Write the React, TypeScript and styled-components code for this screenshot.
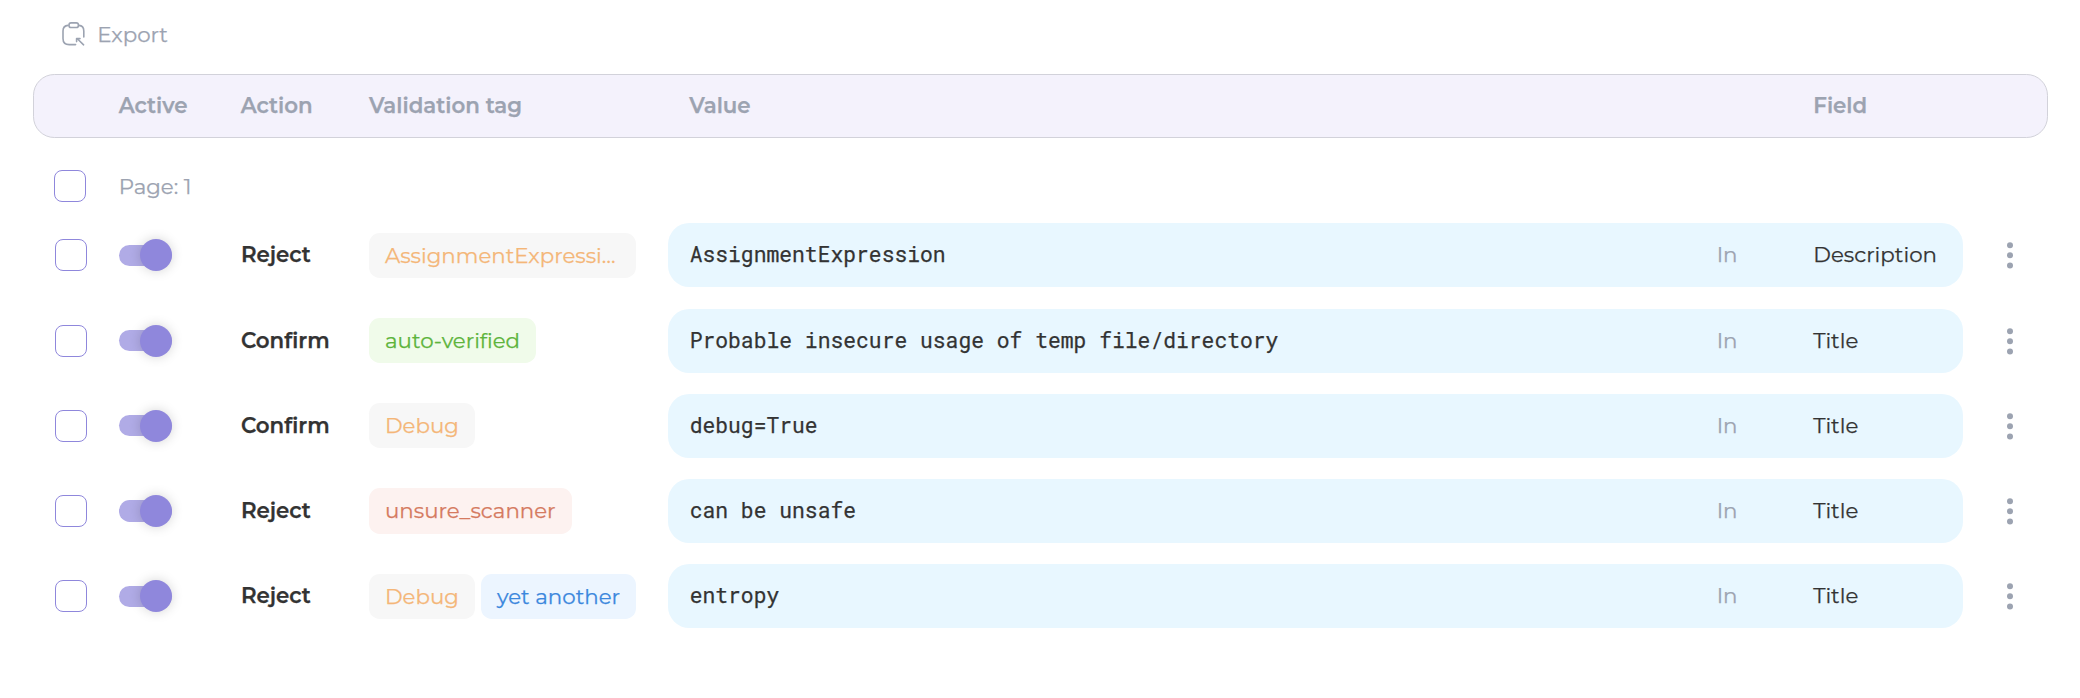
import React from "react";
import styled, { createGlobalStyle } from "styled-components";

const GlobalStyle = createGlobalStyle`
  * { box-sizing: border-box; }
  body {
    margin: 0;
    background: #fff;
    color: #333;
    font: 400 21.333px/26px Montserrat, sans-serif;
    -webkit-text-stroke: 0.25px currentColor;
  }
`;

const muted = "#9ca3b1";

const Page = styled.main`
  padding: 20px 32px 0 33.33px;
`;

const ExportButton = styled.button`
  display: flex;
  align-items: center;
  gap: 9px;
  height: 28px;
  margin: 0 0 26px;
  padding: 0 0 0 27px;
  border: 0;
  background: none;
  color: ${muted};
  font: inherit;
`;

const HeaderRow = styled.div`
  display: grid;
  grid-template-columns: 64px 122px 128.33px 320.33px 1124px 1fr;
  align-items: center;
  height: 64px;
  padding: 0 0 2px 20.33px;
  border: 1px solid #d2d2da;
  border-radius: 21.33px;
  background: #f4f2fc;
  color: ${muted};
  font-weight: 600;
`;

const HeaderCell = styled.span`
  &:first-child {
    grid-column: 2;
  }
`;

const PageRow = styled.div`
  display: grid;
  grid-template-columns: 64.67px 1fr;
  align-items: center;
  height: 64px;
  margin-top: 16px;
  padding-left: 20.67px;
  color: ${muted};
`;

const Checkbox = styled.span`
  display: block;
  width: 32px;
  height: 32px;
  border: 1px solid #8f87dc;
  border-radius: 8px;
  background: #fff;
`;

const Rows = styled.div`
  display: flex;
  flex-direction: column;
  gap: 21.3px;
  margin-top: 5.22px;
`;

const Row = styled.div`
  display: grid;
  grid-template-columns: 64px 122.33px 128px 299.33px 1295px 1fr;
  align-items: center;
  height: 64px;
  padding-left: 21.33px;
`;

const Track = styled.span`
  display: flex;
  align-items: center;
  justify-content: flex-end;
  width: 53.33px;
  height: 21.33px;
  border-radius: 10.67px;
  background: #b0abe6;
`;

const Thumb = styled.span`
  flex: none;
  width: 32px;
  height: 32px;
  border-radius: 50%;
  background: #8f87dc;
  box-shadow: 0 0 12px rgba(0, 0, 0, 0.17);
`;

const Action = styled.span`
  padding-bottom: 2px;
  font-weight: 600;
`;

const Tags = styled.div`
  display: flex;
  gap: 6px;
  width: 267.33px;
`;

const tones = {
  orange: ["#f7f7f7", "#f4b678"],
  green: ["#f0fbea", "#5db43c"],
  red: ["#fdf2f0", "#d57a60"],
  blue: ["#ecf5ff", "#3b87dd"],
};

type Tone = keyof typeof tones;

const Tag = styled.span<{ $tone: Tone }>`
  height: 45.33px;
  padding: 0 16px;
  border-radius: 10.67px;
  overflow: hidden;
  white-space: nowrap;
  text-overflow: ellipsis;
  line-height: 44.5px;
  background: ${(p) => tones[p.$tone][0]};
  color: ${(p) => tones[p.$tone][1]};
`;

const Condition = styled.div`
  display: grid;
  grid-template-columns: 1027px 96.67px 1fr;
  align-items: center;
  height: 64px;
  padding: 0 0 2px 21.33px;
  border-radius: 21.33px;
  background: #e8f7ff;
`;

const Value = styled.span`
  font-family: "Roboto Mono", monospace;
`;

const Muted = styled.span`
  color: ${muted};
`;

const MenuIcon = styled.svg`
  display: block;
  justify-self: start;
  margin-left: 42.67px;
`;

function ExportIcon() {
  return (
    <svg width="28" height="28" viewBox="0 0 28 28" fill="none" stroke="currentColor" strokeWidth="1.6" strokeLinecap="round" strokeLinejoin="round">
      <path d="M8 5.4C4.6 5.7 3 7.3 3 11v7.4c0 4.2 2 6.2 6.2 6.2h6.4" />
      <path d="M18.900 5.400c3.500.2 4.900 1.900 4.900 5.600v6" />
      <rect x="9" y="2.9" width="9.4" height="4.6" rx="2.1" />
      <path d="M23.600 24.800l-6-5.800" />
      <path d="M16.600 21.600v-3h3.400" />
    </svg>
  );
}

function KebabIcon() {
  return (
    <MenuIcon width="8" height="30" viewBox="0 0 8 30" fill="#9ca3b1">
      <circle cx="4" cy="5.2" r="3" />
      <circle cx="4" cy="15.3" r="3" />
      <circle cx="4" cy="25.4" r="3" />
    </MenuIcon>
  );
}

interface Rule {
  action: "Reject" | "Confirm";
  tags: { label: string; tone: Tone }[];
  value: string;
  field: string;
}

const rules: Rule[] = [
  { action: "Reject", tags: [{ label: "AssignmentExpression", tone: "orange" }], value: "AssignmentExpression", field: "Description" },
  { action: "Confirm", tags: [{ label: "auto-verified", tone: "green" }], value: "Probable insecure usage of temp file/directory", field: "Title" },
  { action: "Confirm", tags: [{ label: "Debug", tone: "orange" }], value: "debug=True", field: "Title" },
  { action: "Reject", tags: [{ label: "unsure_scanner", tone: "red" }], value: "can be unsafe", field: "Title" },
  { action: "Reject", tags: [{ label: "Debug", tone: "orange" }, { label: "yet another", tone: "blue" }], value: "entropy", field: "Title" },
];

function RuleRow({ rule }: { rule: Rule }) {
  return (
    <Row>
      <Checkbox role="checkbox" aria-checked="false" />
      <Track role="switch" aria-checked="true">
        <Thumb />
      </Track>
      <Action>{rule.action}</Action>
      <Tags>
        {rule.tags.map((tag) => (
          <Tag key={tag.label} $tone={tag.tone}>{tag.label}</Tag>
        ))}
      </Tags>
      <Condition>
        <Value>{rule.value}</Value>
        <Muted>In</Muted>
        <span>{rule.field}</span>
      </Condition>
      <KebabIcon />
    </Row>
  );
}

export default function App() {
  return (
    <Page>
      <GlobalStyle />
      <ExportButton>
        <ExportIcon />
        Export
      </ExportButton>
      <HeaderRow>
        <HeaderCell>Active</HeaderCell>
        <HeaderCell>Action</HeaderCell>
        <HeaderCell>Validation tag</HeaderCell>
        <HeaderCell>Value</HeaderCell>
        <HeaderCell>Field</HeaderCell>
      </HeaderRow>
      <PageRow>
        <Checkbox role="checkbox" aria-checked="false" />
        Page: 1
      </PageRow>
      <Rows>
        {rules.map((rule) => (
          <RuleRow key={rule.value} rule={rule} />
        ))}
      </Rows>
    </Page>
  );
}
